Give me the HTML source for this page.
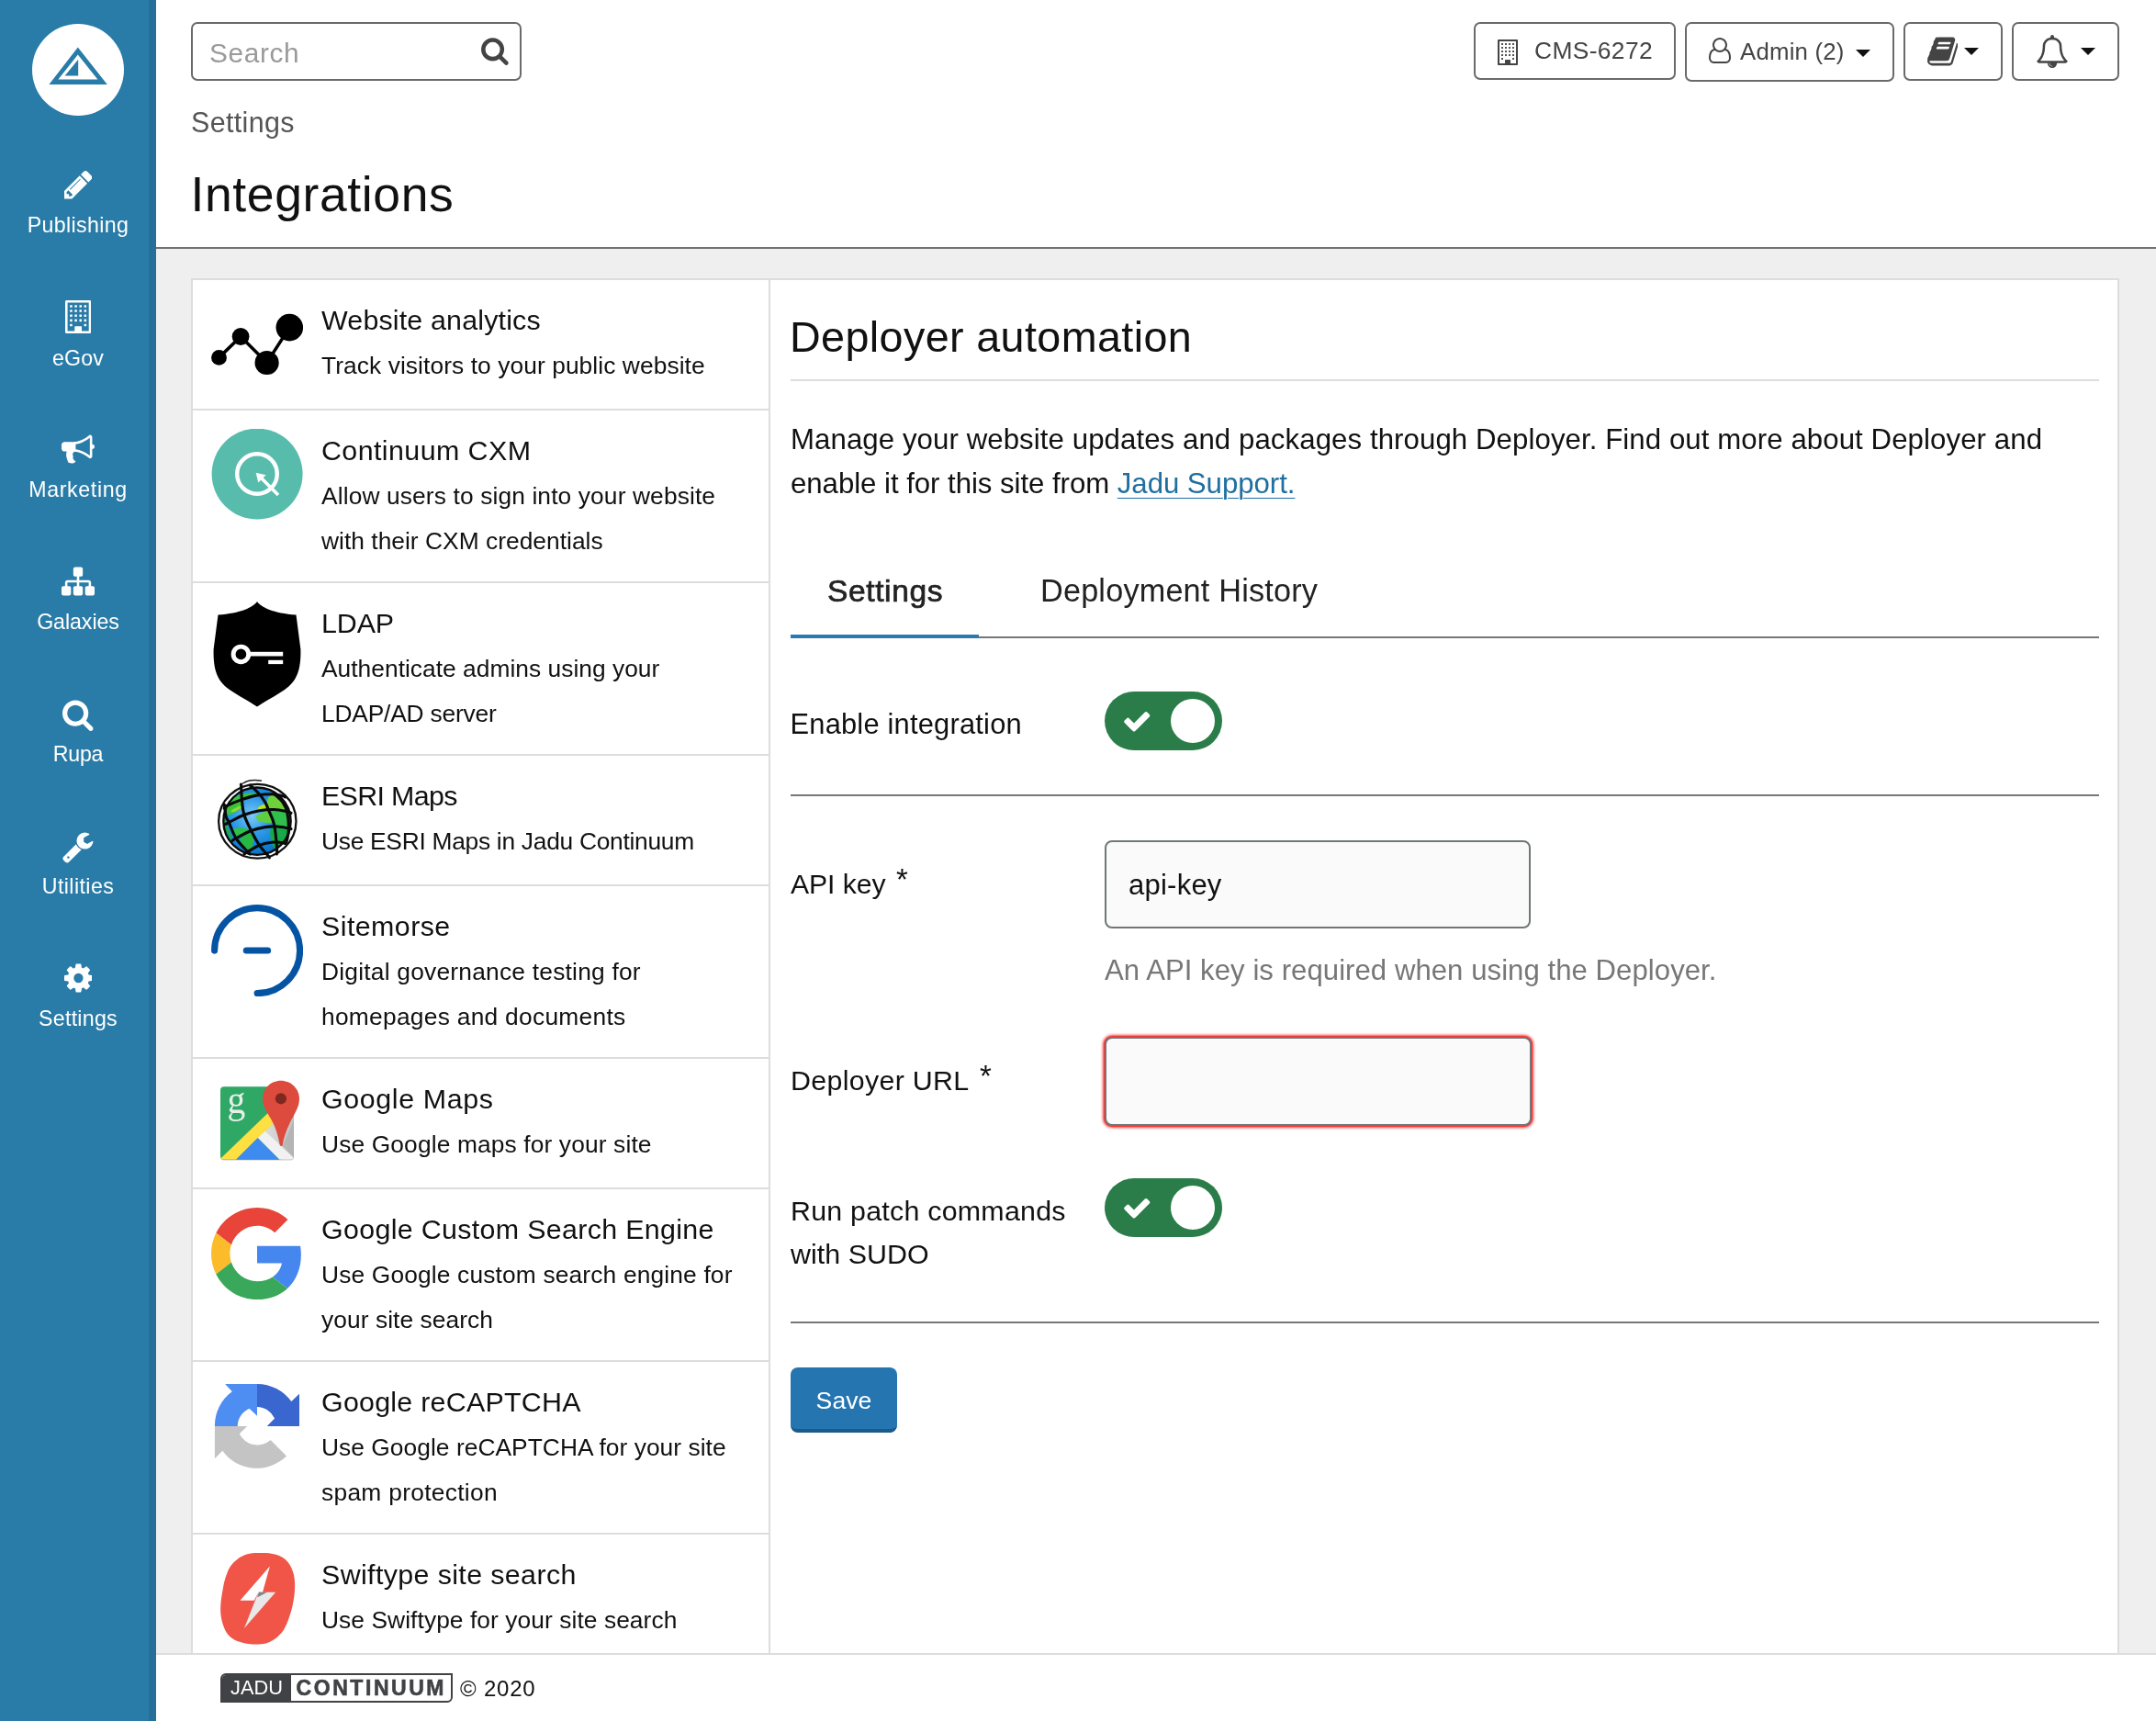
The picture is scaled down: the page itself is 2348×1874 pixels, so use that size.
<!DOCTYPE html>
<html lang="en">
<head>
<meta charset="utf-8">
<title>Integrations</title>
<style>
*{box-sizing:border-box;margin:0;padding:0}
html,body{width:2348px;height:1874px}
body{font-family:"Liberation Sans",sans-serif;background:#efefef;color:#111;position:relative;font-size:28px}
svg.fa{display:inline-block;fill:currentColor;vertical-align:middle}
a{color:#2475a8}
/* sidebar */
#sidebar{position:absolute;left:0;top:0;width:170px;height:1874px;background:#2a7ca8}
#sidebar:after{content:"";position:absolute;right:0;top:0;width:8px;height:100%;background:#256f98}
#logo{position:absolute;left:35px;top:26px;width:100px;height:100px;border-radius:50%;background:#fff}
.nav{position:absolute;left:0;width:170px;text-align:center;color:#fff}
.nav .ic{position:absolute;left:0;width:170px;top:0;height:40px;display:flex;justify-content:center;align-items:center}
.nav .lb{position:absolute;left:0;width:170px;top:0;font-size:23.2px;line-height:30px;white-space:nowrap}
/* header */
#header{position:absolute;left:170px;top:0;width:2178px;height:271px;background:#fff;border-bottom:2px solid #737373}
#search{position:absolute;left:38px;top:24px;width:360px;height:64px;border:2px solid #6a6a6a;border-radius:7px;background:#fff}
#search>span{position:absolute;left:18px;color:#9a9a9a;white-space:nowrap}
#search svg{position:absolute;right:12px;top:13px;color:#444}
#crumb{position:absolute;left:38px;color:#555;white-space:nowrap}
#title{position:absolute;left:37.5px;color:#111;font-weight:400;white-space:nowrap}
.tbtn{position:absolute;top:24px;height:64px;border:2px solid #6a6a6a;border-radius:7px;background:#fff;color:#444;font-size:28px;line-height:60px;white-space:nowrap}
.tbtn .i{position:absolute;line-height:0}
.tbtn .t{position:absolute}
.caret{position:absolute;width:0;height:0;border-left:8px solid transparent;border-right:8px solid transparent;border-top:8.5px solid #111}
/* main panel */
#panel{position:absolute;left:208px;top:303px;width:2100px;height:1498px;background:#fff;border:2px solid #ddd;border-bottom:0;overflow:hidden}
#list{position:absolute;left:0;top:0;width:629px;height:1498px;border-right:2px solid #ddd}
.it{position:relative;width:627px;border-bottom:2px solid #ddd}
.it.s{height:142px}.it.l{height:188px}
.it .im{position:absolute;left:20px;top:20px;width:100px}
.it .t{position:absolute;left:140px;top:18px;font-size:30.4px;line-height:50px;white-space:nowrap;color:#111}
.it .d{position:absolute;left:140px;top:69.4px;font-size:26.35px;line-height:49px;white-space:nowrap;color:#111}
#content{position:absolute;left:630px;top:0;width:1468px;height:1498px}
#content .abs{position:absolute;white-space:nowrap}
.hr{position:absolute;left:21px;width:1425px;height:2px;background:#777}
.lbl{position:absolute;left:21px;white-space:nowrap;color:#111}
.lbl sup{font-size:33px;line-height:0;vertical-align:baseline;position:relative;top:-4px;left:3px;letter-spacing:0}
.inp{position:absolute;left:363px;width:464px;height:96px;border:2px solid #707777;border-radius:8px;background:#fafafa}
.tog{position:absolute;left:363px;width:128px;height:64px;border-radius:32px;background:#2a7d49}
.tog b{position:absolute;right:8px;top:8px;width:48px;height:48px;border-radius:50%;background:#fff}
.tog svg{position:absolute;left:19.2px;top:16.1px;color:#fff}
#save{position:absolute;left:21px;top:1184px;width:116px;height:71px;border-radius:8px;background:#2575b0;border-bottom:4px solid #1c5a8a;color:#fff;font-size:26.6px;line-height:73px;text-align:center}
/* footer */
#footer{position:absolute;left:170px;top:1800px;width:2178px;height:74px;background:#fff;border-top:2px solid #ddd}
#jlogo{position:absolute;left:70px;top:20px;width:253px;height:32px;background:#fff;border:2px solid #414245;border-radius:6px 0 6px 0;overflow:hidden}
#jlogo .j{position:absolute;left:-2px;top:-2px;width:76.5px;height:32px;background:#414245;color:#fff;font-size:21.8px;line-height:32px;padding-left:11px;white-space:nowrap}
#jlogo .c{position:absolute;left:80.6px;top:-2px;font-weight:700;font-size:23px;letter-spacing:2.55px;-webkit-text-stroke:.6px #414245;line-height:32px;color:#414245;white-space:nowrap}
#copy{position:absolute;left:331px;white-space:nowrap;color:#111}
#para a{color:#1f6f9f;text-decoration:underline;text-decoration-thickness:1.3px;text-underline-offset:4.5px}
.im svg{display:block}
#sidebar,#header,#panel,#footer{will-change:transform}
</style>
</head>
<body>
<div id="sidebar">
  <div id="logo"><svg width="100" height="100" viewBox="0 0 100 100"><path fill="#2a7ca8" fill-rule="evenodd" d="M49.8 25.4 L81.8 66 L18.4 66 Z M49.8 33.6 L71.4 60.4 L28.4 60.4 Z"/><path fill="#2a7ca8" d="M50.2 38.8 L50.2 56.6 L35.6 56.6 Z"/></svg></div>
  <div class="nav" style="top:181px"><div class="ic"><svg class="fa" width="30.86" height="36.00" viewBox="0 -1536 1536 1792" ><path transform="scale(1,-1)" d="M363 0l91 91l-235 235l-91 -91v-107h128v-128h107zM886 928q0 22 -22 22q-10 0 -17 -7l-542 -542q-7 -7 -7 -17q0 -22 22 -22q10 0 17 7l542 542q7 7 7 17zM832 1120l416 -416l-832 -832h-416v416zM1515 1024q0 -53 -37 -90l-166 -166l-416 416l166 165q36 38 90 38 q53 0 91 -38l235 -234q37 -39 37 -91z"/></svg></div><div class="lb" style="top:49px"><span style="letter-spacing:0.371px">Publishing</span></div></div>
  <div class="nav" style="top:325px"><div class="ic"><svg class="fa" width="28.29" height="36.00" viewBox="0 -1536 1408 1792" ><path transform="scale(1,-1)" d="M384 224v-64q0 -13 -9.5 -22.5t-22.5 -9.5h-64q-13 0 -22.5 9.5t-9.5 22.5v64q0 13 9.5 22.5t22.5 9.5h64q13 0 22.5 -9.5t9.5 -22.5zM384 480v-64q0 -13 -9.5 -22.5t-22.5 -9.5h-64q-13 0 -22.5 9.5t-9.5 22.5v64q0 13 9.5 22.5t22.5 9.5h64q13 0 22.5 -9.5t9.5 -22.5z M640 480v-64q0 -13 -9.5 -22.5t-22.5 -9.5h-64q-13 0 -22.5 9.5t-9.5 22.5v64q0 13 9.5 22.5t22.5 9.5h64q13 0 22.5 -9.5t9.5 -22.5zM384 736v-64q0 -13 -9.5 -22.5t-22.5 -9.5h-64q-13 0 -22.5 9.5t-9.5 22.5v64q0 13 9.5 22.5t22.5 9.5h64q13 0 22.5 -9.5t9.5 -22.5z M1152 224v-64q0 -13 -9.5 -22.5t-22.5 -9.5h-64q-13 0 -22.5 9.5t-9.5 22.5v64q0 13 9.5 22.5t22.5 9.5h64q13 0 22.5 -9.5t9.5 -22.5zM896 480v-64q0 -13 -9.5 -22.5t-22.5 -9.5h-64q-13 0 -22.5 9.5t-9.5 22.5v64q0 13 9.5 22.5t22.5 9.5h64q13 0 22.5 -9.5t9.5 -22.5z M640 736v-64q0 -13 -9.5 -22.5t-22.5 -9.5h-64q-13 0 -22.5 9.5t-9.5 22.5v64q0 13 9.5 22.5t22.5 9.5h64q13 0 22.5 -9.5t9.5 -22.5zM384 992v-64q0 -13 -9.5 -22.5t-22.5 -9.5h-64q-13 0 -22.5 9.5t-9.5 22.5v64q0 13 9.5 22.5t22.5 9.5h64q13 0 22.5 -9.5t9.5 -22.5z M1152 480v-64q0 -13 -9.5 -22.5t-22.5 -9.5h-64q-13 0 -22.5 9.5t-9.5 22.5v64q0 13 9.5 22.5t22.5 9.5h64q13 0 22.5 -9.5t9.5 -22.5zM896 736v-64q0 -13 -9.5 -22.5t-22.5 -9.5h-64q-13 0 -22.5 9.5t-9.5 22.5v64q0 13 9.5 22.5t22.5 9.5h64q13 0 22.5 -9.5t9.5 -22.5z M640 992v-64q0 -13 -9.5 -22.5t-22.5 -9.5h-64q-13 0 -22.5 9.5t-9.5 22.5v64q0 13 9.5 22.5t22.5 9.5h64q13 0 22.5 -9.5t9.5 -22.5zM384 1248v-64q0 -13 -9.5 -22.5t-22.5 -9.5h-64q-13 0 -22.5 9.5t-9.5 22.5v64q0 13 9.5 22.5t22.5 9.5h64q13 0 22.5 -9.5t9.5 -22.5z M1152 736v-64q0 -13 -9.5 -22.5t-22.5 -9.5h-64q-13 0 -22.5 9.5t-9.5 22.5v64q0 13 9.5 22.5t22.5 9.5h64q13 0 22.5 -9.5t9.5 -22.5zM896 992v-64q0 -13 -9.5 -22.5t-22.5 -9.5h-64q-13 0 -22.5 9.5t-9.5 22.5v64q0 13 9.5 22.5t22.5 9.5h64q13 0 22.5 -9.5t9.5 -22.5z M640 1248v-64q0 -13 -9.5 -22.5t-22.5 -9.5h-64q-13 0 -22.5 9.5t-9.5 22.5v64q0 13 9.5 22.5t22.5 9.5h64q13 0 22.5 -9.5t9.5 -22.5zM1152 992v-64q0 -13 -9.5 -22.5t-22.5 -9.5h-64q-13 0 -22.5 9.5t-9.5 22.5v64q0 13 9.5 22.5t22.5 9.5h64q13 0 22.5 -9.5t9.5 -22.5z M896 1248v-64q0 -13 -9.5 -22.5t-22.5 -9.5h-64q-13 0 -22.5 9.5t-9.5 22.5v64q0 13 9.5 22.5t22.5 9.5h64q13 0 22.5 -9.5t9.5 -22.5zM1152 1248v-64q0 -13 -9.5 -22.5t-22.5 -9.5h-64q-13 0 -22.5 9.5t-9.5 22.5v64q0 13 9.5 22.5t22.5 9.5h64q13 0 22.5 -9.5t9.5 -22.5z M896 -128h384v1536h-1152v-1536h384v224q0 13 9.5 22.5t22.5 9.5h320q13 0 22.5 -9.5t9.5 -22.5v-224zM1408 1472v-1664q0 -26 -19 -45t-45 -19h-1280q-26 0 -45 19t-19 45v1664q0 26 19 45t45 19h1280q26 0 45 -19t19 -45z"/></svg></div><div class="lb" style="top:49.5px"><span style="letter-spacing:0.132px">eGov</span></div></div>
  <div class="nav" style="top:469px"><div class="ic"><svg class="fa" width="36.00" height="36.00" viewBox="0 -1536 1792 1792" ><path transform="scale(1,-1)" d="M1664 896q53 0 90.5 -37.5t37.5 -90.5t-37.5 -90.5t-90.5 -37.5v-384q0 -52 -38 -90t-90 -38q-417 347 -812 380q-58 -19 -91 -66t-31 -100.5t40 -92.5q-20 -33 -23 -65.5t6 -58t33.5 -55t48 -50t61.5 -50.5q-29 -58 -111.5 -83t-168.5 -11.5t-132 55.5q-7 23 -29.5 87.5 t-32 94.5t-23 89t-15 101t3.5 98.5t22 110.5h-122q-66 0 -113 47t-47 113v192q0 66 47 113t113 47h480q435 0 896 384q52 0 90 -38t38 -90v-384zM1536 292v954q-394 -302 -768 -343v-270q377 -42 768 -341z"/></svg></div><div class="lb" style="top:49px"><span style="letter-spacing:0.627px">Marketing</span></div></div>
  <div class="nav" style="top:613.4px"><div class="ic"><svg class="fa" width="36.00" height="36.00" viewBox="0 -1536 1792 1792" ><path transform="scale(1,-1)" d="M1792 288v-320q0 -40 -28 -68t-68 -28h-320q-40 0 -68 28t-28 68v320q0 40 28 68t68 28h96v192h-512v-192h96q40 0 68 -28t28 -68v-320q0 -40 -28 -68t-68 -28h-320q-40 0 -68 28t-28 68v320q0 40 28 68t68 28h96v192h-512v-192h96q40 0 68 -28t28 -68v-320 q0 -40 -28 -68t-68 -28h-320q-40 0 -68 28t-28 68v320q0 40 28 68t68 28h96v192q0 52 38 90t90 38h512v192h-96q-40 0 -68 28t-28 68v320q0 40 28 68t68 28h320q40 0 68 -28t28 -68v-320q0 -40 -28 -68t-68 -28h-96v-192h512q52 0 90 -38t38 -90v-192h96q40 0 68 -28t28 -68 z"/></svg></div><div class="lb" style="top:48.6px"><span style="letter-spacing:-0.068px">Galaxies</span></div></div>
  <div class="nav" style="top:757.5px"><div class="ic"><svg class="fa" width="33.43" height="36.00" viewBox="0 -1536 1664 1792" ><path transform="scale(1,-1)" d="M1152 704q0 185 -131.5 316.5t-316.5 131.5t-316.5 -131.5t-131.5 -316.5t131.5 -316.5t316.5 -131.5t316.5 131.5t131.5 316.5zM1664 -128q0 -52 -38 -90t-90 -38q-54 0 -90 38l-343 342q-179 -124 -399 -124q-143 0 -273.5 55.5t-225 150t-150 225t-55.5 273.5 t55.5 273.5t150 225t225 150t273.5 55.5t273.5 -55.5t225 -150t150 -225t55.5 -273.5q0 -220 -124 -399l343 -343q37 -37 37 -90z"/></svg></div><div class="lb" style="top:48.5px"><span style="letter-spacing:-0.290px">Rupa</span></div></div>
  <div class="nav" style="top:901.5px"><div class="ic"><svg class="fa" width="33.43" height="36.00" viewBox="0 -1536 1664 1792" ><path transform="scale(1,-1)" d="M384 64q0 26 -19 45t-45 19t-45 -19t-19 -45t19 -45t45 -19t45 19t19 45zM1028 484l-682 -682q-37 -37 -90 -37q-52 0 -91 37l-106 108q-38 36 -38 90q0 53 38 91l681 681q39 -98 114.5 -173.5t173.5 -114.5zM1662 919q0 -39 -23 -106q-47 -134 -164.5 -217.5 t-258.5 -83.5q-185 0 -316.5 131.5t-131.5 316.5t131.5 316.5t316.5 131.5q58 0 121.5 -16.5t107.5 -46.5q16 -11 16 -28t-16 -28l-293 -169v-224l193 -107q5 3 79 48.5t135.5 81t70.5 35.5q15 0 23.5 -10t8.5 -25z"/></svg></div><div class="lb" style="top:48.5px"><span style="letter-spacing:0.418px">Utilities</span></div></div>
  <div class="nav" style="top:1045px"><div class="ic"><svg class="fa" width="30.86" height="36.00" viewBox="0 -1536 1536 1792" ><path transform="scale(1,-1)" d="M1024 640q0 106 -75 181t-181 75t-181 -75t-75 -181t75 -181t181 -75t181 75t75 181zM1536 749v-222q0 -12 -8 -23t-20 -13l-185 -28q-19 -54 -39 -91q35 -50 107 -138q10 -12 10 -25t-9 -23q-27 -37 -99 -108t-94 -71q-12 0 -26 9l-138 108q-44 -23 -91 -38 q-16 -136 -29 -186q-7 -28 -36 -28h-222q-14 0 -24.5 8.5t-11.5 21.5l-28 184q-49 16 -90 37l-141 -107q-10 -9 -25 -9q-14 0 -25 11q-126 114 -165 168q-7 10 -7 23q0 12 8 23q15 21 51 66.5t54 70.5q-27 50 -41 99l-183 27q-13 2 -21 12.5t-8 23.5v222q0 12 8 23t19 13 l186 28q14 46 39 92q-40 57 -107 138q-10 12 -10 24q0 10 9 23q26 36 98.5 107.5t94.5 71.5q13 0 26 -10l138 -107q44 23 91 38q16 136 29 186q7 28 36 28h222q14 0 24.5 -8.5t11.5 -21.5l28 -184q49 -16 90 -37l142 107q9 9 24 9q13 0 25 -10q129 -119 165 -170q7 -8 7 -22 q0 -12 -8 -23q-15 -21 -51 -66.5t-54 -70.5q26 -50 41 -98l183 -28q13 -2 21 -12.5t8 -23.5z"/></svg></div><div class="lb" style="top:49px"><span style="letter-spacing:0.265px">Settings</span></div></div>
</div>
<div id="header">
  <div id="search"><span style="top:12.27px;font-size:29.8px;line-height:40px"><span style="letter-spacing:0.628px">Search</span></span><svg class="fa" width="29.71" height="32.00" viewBox="0 -1536 1664 1792" ><path transform="scale(1,-1)" d="M1152 704q0 185 -131.5 316.5t-316.5 131.5t-316.5 -131.5t-131.5 -316.5t131.5 -316.5t316.5 -131.5t316.5 131.5t131.5 316.5zM1664 -128q0 -52 -38 -90t-90 -38q-54 0 -90 38l-343 342q-179 -124 -399 -124q-143 0 -273.5 55.5t-225 150t-150 225t-55.5 273.5 t55.5 273.5t150 225t225 150t273.5 55.5t273.5 -55.5t225 -150t150 -225t55.5 -273.5q0 -220 -124 -399l343 -343q37 -37 37 -90z"/></svg></div>
  <div id="crumb" style="top:113.25px;font-size:30.44px;line-height:40px"><span style="letter-spacing:0.355px">Settings</span></div>
  <h1 id="title" style="top:177.36px;font-size:53.5px;line-height:70px"><span style="letter-spacing:0.614px">Integrations</span></h1>
  <div class="tbtn" id="b1" style="left:1435px;width:220px;height:63px">
    <span class="i" style="left:24px;top:17px"><svg class="fa" width="22.00" height="28.00" viewBox="0 -1536 1408 1792" ><path transform="scale(1,-1)" d="M384 224v-64q0 -13 -9.5 -22.5t-22.5 -9.5h-64q-13 0 -22.5 9.5t-9.5 22.5v64q0 13 9.5 22.5t22.5 9.5h64q13 0 22.5 -9.5t9.5 -22.5zM384 480v-64q0 -13 -9.5 -22.5t-22.5 -9.5h-64q-13 0 -22.5 9.5t-9.5 22.5v64q0 13 9.5 22.5t22.5 9.5h64q13 0 22.5 -9.5t9.5 -22.5z M640 480v-64q0 -13 -9.5 -22.5t-22.5 -9.5h-64q-13 0 -22.5 9.5t-9.5 22.5v64q0 13 9.5 22.5t22.5 9.5h64q13 0 22.5 -9.5t9.5 -22.5zM384 736v-64q0 -13 -9.5 -22.5t-22.5 -9.5h-64q-13 0 -22.5 9.5t-9.5 22.5v64q0 13 9.5 22.5t22.5 9.5h64q13 0 22.5 -9.5t9.5 -22.5z M1152 224v-64q0 -13 -9.5 -22.5t-22.5 -9.5h-64q-13 0 -22.5 9.5t-9.5 22.5v64q0 13 9.5 22.5t22.5 9.5h64q13 0 22.5 -9.5t9.5 -22.5zM896 480v-64q0 -13 -9.5 -22.5t-22.5 -9.5h-64q-13 0 -22.5 9.5t-9.5 22.5v64q0 13 9.5 22.5t22.5 9.5h64q13 0 22.5 -9.5t9.5 -22.5z M640 736v-64q0 -13 -9.5 -22.5t-22.5 -9.5h-64q-13 0 -22.5 9.5t-9.5 22.5v64q0 13 9.5 22.5t22.5 9.5h64q13 0 22.5 -9.5t9.5 -22.5zM384 992v-64q0 -13 -9.5 -22.5t-22.5 -9.5h-64q-13 0 -22.5 9.5t-9.5 22.5v64q0 13 9.5 22.5t22.5 9.5h64q13 0 22.5 -9.5t9.5 -22.5z M1152 480v-64q0 -13 -9.5 -22.5t-22.5 -9.5h-64q-13 0 -22.5 9.5t-9.5 22.5v64q0 13 9.5 22.5t22.5 9.5h64q13 0 22.5 -9.5t9.5 -22.5zM896 736v-64q0 -13 -9.5 -22.5t-22.5 -9.5h-64q-13 0 -22.5 9.5t-9.5 22.5v64q0 13 9.5 22.5t22.5 9.5h64q13 0 22.5 -9.5t9.5 -22.5z M640 992v-64q0 -13 -9.5 -22.5t-22.5 -9.5h-64q-13 0 -22.5 9.5t-9.5 22.5v64q0 13 9.5 22.5t22.5 9.5h64q13 0 22.5 -9.5t9.5 -22.5zM384 1248v-64q0 -13 -9.5 -22.5t-22.5 -9.5h-64q-13 0 -22.5 9.5t-9.5 22.5v64q0 13 9.5 22.5t22.5 9.5h64q13 0 22.5 -9.5t9.5 -22.5z M1152 736v-64q0 -13 -9.5 -22.5t-22.5 -9.5h-64q-13 0 -22.5 9.5t-9.5 22.5v64q0 13 9.5 22.5t22.5 9.5h64q13 0 22.5 -9.5t9.5 -22.5zM896 992v-64q0 -13 -9.5 -22.5t-22.5 -9.5h-64q-13 0 -22.5 9.5t-9.5 22.5v64q0 13 9.5 22.5t22.5 9.5h64q13 0 22.5 -9.5t9.5 -22.5z M640 1248v-64q0 -13 -9.5 -22.5t-22.5 -9.5h-64q-13 0 -22.5 9.5t-9.5 22.5v64q0 13 9.5 22.5t22.5 9.5h64q13 0 22.5 -9.5t9.5 -22.5zM1152 992v-64q0 -13 -9.5 -22.5t-22.5 -9.5h-64q-13 0 -22.5 9.5t-9.5 22.5v64q0 13 9.5 22.5t22.5 9.5h64q13 0 22.5 -9.5t9.5 -22.5z M896 1248v-64q0 -13 -9.5 -22.5t-22.5 -9.5h-64q-13 0 -22.5 9.5t-9.5 22.5v64q0 13 9.5 22.5t22.5 9.5h64q13 0 22.5 -9.5t9.5 -22.5zM1152 1248v-64q0 -13 -9.5 -22.5t-22.5 -9.5h-64q-13 0 -22.5 9.5t-9.5 22.5v64q0 13 9.5 22.5t22.5 9.5h64q13 0 22.5 -9.5t9.5 -22.5z M896 -128h384v1536h-1152v-1536h384v224q0 13 9.5 22.5t22.5 9.5h320q13 0 22.5 -9.5t9.5 -22.5v-224zM1408 1472v-1664q0 -26 -19 -45t-45 -19h-1280q-26 0 -45 19t-19 45v1664q0 26 19 45t45 19h1280q26 0 45 -19t19 -45z"/></svg></span><span class="t" style="left:64px;top:8.65px;font-size:26.4px;line-height:40px"><span style="letter-spacing:0.350px">CMS-6272</span></span></div>
  <div class="tbtn" id="b2" style="left:1665px;width:228px;height:65px">
    <span class="i" style="left:23.5px;top:15px"><svg class="fa" width="24.00" height="28.00" viewBox="0 -1536 1536 1792" ><path transform="scale(1,-1)" d="M1201 752q47 -14 89.5 -38t89 -73t79.5 -115.5t55 -172t22 -236.5q0 -154 -100 -263.5t-241 -109.5h-854q-141 0 -241 109.5t-100 263.5q0 131 22 236.5t55 172t79.5 115.5t89 73t89.5 38q-79 125 -79 272q0 104 40.5 198.5t109.5 163.5t163.5 109.5t198.5 40.5 t198.5 -40.5t163.5 -109.5t109.5 -163.5t40.5 -198.5q0 -147 -79 -272zM768 1408q-159 0 -271.5 -112.5t-112.5 -271.5t112.5 -271.5t271.5 -112.5t271.5 112.5t112.5 271.5t-112.5 271.5t-271.5 112.5zM1195 -128q88 0 150.5 71.5t62.5 173.5q0 239 -78.5 377t-225.5 145 q-145 -127 -336 -127t-336 127q-147 -7 -225.5 -145t-78.5 -377q0 -102 62.5 -173.5t150.5 -71.5h854z"/></svg></span><span class="t" style="left:58px;top:9.96px;font-size:25.8px;line-height:40px"><span style="letter-spacing:0.201px">Admin (2)</span></span><i class="caret" style="left:184px;top:28px"></i></div>
  <div class="tbtn" id="b3" style="left:1903px;width:108px">
    <span class="i" style="left:24px;top:12px"><svg class="fa" width="33.43" height="36.00" viewBox="0 -1536 1664 1792" ><path transform="scale(1,-1)" d="M1639 1058q40 -57 18 -129l-275 -906q-19 -64 -76.5 -107.5t-122.5 -43.5h-923q-77 0 -148.5 53.5t-99.5 131.5q-24 67 -2 127q0 4 3 27t4 37q1 8 -3 21.5t-3 19.5q2 11 8 21t16.5 23.5t16.5 23.5q23 38 45 91.5t30 91.5q3 10 0.5 30t-0.5 28q3 11 17 28t17 23 q21 36 42 92t25 90q1 9 -2.5 32t0.5 28q4 13 22 30.5t22 22.5q19 26 42.5 84.5t27.5 96.5q1 8 -3 25.5t-2 26.5q2 8 9 18t18 23t17 21q8 12 16.5 30.5t15 35t16 36t19.5 32t26.5 23.5t36 11.5t47.5 -5.5l-1 -3q38 9 51 9h761q74 0 114 -56t18 -130l-274 -906 q-36 -119 -71.5 -153.5t-128.5 -34.5h-869q-27 0 -38 -15q-11 -16 -1 -43q24 -70 144 -70h923q29 0 56 15.5t35 41.5l300 987q7 22 5 57q38 -15 59 -43zM575 1056q-4 -13 2 -22.5t20 -9.5h608q13 0 25.5 9.5t16.5 22.5l21 64q4 13 -2 22.5t-20 9.5h-608q-13 0 -25.5 -9.5 t-16.5 -22.5zM492 800q-4 -13 2 -22.5t20 -9.5h608q13 0 25.5 9.5t16.5 22.5l21 64q4 13 -2 22.5t-20 9.5h-608q-13 0 -25.5 -9.5t-16.5 -22.5z"/></svg></span><i class="caret" style="left:64px;top:26px"></i></div>
  <div class="tbtn" id="b4" style="left:2021px;width:117px">
    <span class="i" style="left:24px;top:12px"><svg class="fa" width="36.00" height="36.00" viewBox="0 -1536 1792 1792" ><path transform="scale(1,-1)" d="M912 -160q0 16 -16 16q-59 0 -101.5 42.5t-42.5 101.5q0 16 -16 16t-16 -16q0 -73 51.5 -124.5t124.5 -51.5q16 0 16 16zM246 128h1300q-266 300 -266 832q0 51 -24 105t-69 103t-121.5 80.5t-169.5 31.5t-169.5 -31.5t-121.5 -80.5t-69 -103t-24 -105q0 -532 -266 -832z M1728 128q0 -52 -38 -90t-90 -38h-448q0 -106 -75 -181t-181 -75t-181 75t-75 181h-448q-52 0 -90 38t-38 90q50 42 91 88t85 119.5t74.5 158.5t50 206t19.5 260q0 152 117 282.5t307 158.5q-8 19 -8 39q0 40 28 68t68 28t68 -28t28 -68q0 -20 -8 -39q190 -28 307 -158.5 t117 -282.5q0 -139 19.5 -260t50 -206t74.5 -158.5t85 -119.5t91 -88z"/></svg></span><i class="caret" style="left:73px;top:26px"></i></div>
</div>
<div id="panel">
<div id="list">
  <div class="it s"><div class="im" id="i1"><svg width="100" height="100" viewBox="0 0 100 100"><g stroke="#000" stroke-width="3.6" fill="none"><path d="M8.5 64.4 L32.1 41.5 L60.6 70 L85.3 31.6"/></g><circle cx="8.5" cy="64.4" r="8.4"/><circle cx="32.1" cy="41.5" r="9.4"/><circle cx="60.6" cy="70" r="13.1"/><circle cx="85.3" cy="31.6" r="14.8"/></svg></div><div class="t"><span style="letter-spacing:0.170px">Website analytics</span></div><div class="d"><span style="letter-spacing:0.079px">Track visitors to your public website</span></div></div>
  <div class="it l"><div class="im" id="i2"><svg width="100" height="100" viewBox="0 0 100 100"><circle cx="50.1" cy="49.1" r="49.5" fill="#58bcad"/><circle cx="50" cy="49" r="21.8" fill="none" stroke="#fff" stroke-width="4.4"/><path d="M55 54 L73 72" stroke="#fff" stroke-width="3.6" fill="none"/><path d="M48.7 47.7 L59.6 50.3 L51.3 58.6 Z" fill="#fff"/></svg></div><div class="t"><span style="letter-spacing:0.417px">Continuum CXM</span></div><div class="d"><span style="letter-spacing:0.122px">Allow users to sign into your website</span><br><span style="letter-spacing:0.026px">with their CXM credentials</span></div></div>
  <div class="it l"><div class="im" id="i3"><svg width="100" height="116" viewBox="0 0 100 116"><path d="M50 0 C46 6 32 13 7.5 14.5 L2.6 52 C2 75 7 87 20 96 C30 103 42 109 50 114.5 C58 109 70 103 80 96 C93 87 98 75 97.4 52 L92.5 14.5 C68 13 54 6 50 0 Z" fill="#000"/><circle cx="32.4" cy="57.4" r="8.3" fill="none" stroke="#fff" stroke-width="4.9"/><rect x="42.5" y="54.8" width="35.7" height="4.7" fill="#fff"/><rect x="62.2" y="63.8" width="16" height="4.3" fill="#fff"/></svg></div><div class="t"><span style="letter-spacing:-0.110px">LDAP</span></div><div class="d"><span style="letter-spacing:0.025px">Authenticate admins using your</span><br><span style="letter-spacing:-0.184px">LDAP/AD server</span></div></div>
  <div class="it s"><div class="im" id="i4"><svg width="100" height="100" viewBox="0 0 100 100"><defs><radialGradient id="eg" cx=".42" cy=".42" r=".6"><stop offset="0" stop-color="#7cc8f5"/><stop offset=".45" stop-color="#2f9be8"/><stop offset="1" stop-color="#0473c8"/></radialGradient><clipPath id="ec"><circle cx="50.0" cy="51.2" r="36.4"/></clipPath></defs><ellipse cx="50.3" cy="51.2" rx="42.2" ry="40.4" fill="#fff" stroke="#111" stroke-width="2.3"/><g clip-path="url(#ec)"><circle cx="50.0" cy="51.2" r="36.4" fill="url(#eg)"/><path fill="#3dc03c" d="M16.1 35.9 C16.9 33.8 19.0 30.6 21.8 28.2 C24.7 25.9 29.3 23.1 33.4 21.8 C37.4 20.6 43.5 20.4 46.1 20.6 C48.8 20.8 51.5 21.8 49.3 23.1 C47.2 24.4 35.9 26.1 33.4 28.2 C30.8 30.4 36.1 33.2 34.0 35.9 C31.9 38.6 23.4 43.4 20.6 44.2 C17.7 45.1 17.5 42.4 16.7 41.0 C16.0 39.6 15.2 38.0 16.1 35.9 Z"/><path fill="#8ddb2b" d="M21.8 39.7 C22.8 38.7 28.9 35.3 30.8 34.6 C32.7 34.0 34.3 34.8 33.4 35.9 C32.4 37.0 27.0 40.4 25.0 41.0 C23.1 41.7 20.9 40.8 21.8 39.7 Z"/><path fill="#6fd23a" d="M61.5 27.0 C62.2 24.5 65.0 23.3 67.2 23.1 C69.5 22.9 72.7 23.0 74.9 25.7 C77.1 28.3 82.7 37.1 80.7 39.1 C78.6 41.1 65.9 39.8 62.8 37.8 C59.6 35.8 60.7 29.4 61.5 27.0 Z"/><path fill="#b4e51e" d="M51.2 35.9 C52.3 34.8 57.2 32.4 58.9 32.7 C60.6 33.0 62.5 36.8 61.5 37.8 C60.4 38.9 54.2 39.4 52.5 39.1 C50.8 38.8 50.2 37.0 51.2 35.9 Z"/><path fill="#5fcf3d" d="M50.0 44.9 C52.2 43.7 60.0 39.1 62.8 40.4 C65.5 41.7 68.3 50.7 66.6 52.5 C64.9 54.3 55.4 52.1 52.5 51.2 C49.7 50.4 49.8 48.5 49.3 47.4 C48.9 46.3 47.7 46.0 50.0 44.9 Z"/><path fill="#2fbf4a" d="M64.7 40.4 C66.9 37.9 80.0 39.3 83.2 42.3 C86.5 45.3 86.4 55.8 84.2 58.3 C81.9 60.7 73.0 60.0 69.8 57.0 C66.5 54.0 62.4 42.8 64.7 40.4 Z"/><path fill="#19a94a" d="M65.3 58.9 C68.1 55.8 81.1 57.4 83.8 59.6 C86.6 61.7 83.4 68.1 81.9 71.7 C80.4 75.3 77.3 80.2 74.9 81.3 C72.4 82.4 68.8 81.8 67.2 78.1 C65.6 74.4 62.5 62.0 65.3 58.9 Z"/><path fill="#2dc04a" d="M25.0 59.6 C26.6 58.6 30.7 58.0 33.4 58.3 C36.0 58.6 41.9 59.8 41.0 61.5 C40.2 63.2 31.1 68.1 28.2 68.5 C25.4 68.9 24.3 65.5 23.8 64.0 C23.2 62.5 23.4 60.5 25.0 59.6 Z"/><path fill="#27b743" d="M31.4 71.1 C31.9 67.9 39.8 64.1 42.3 64.0 C44.7 63.9 45.9 67.3 46.1 70.4 C46.3 73.5 44.6 80.4 43.6 82.6 C42.5 84.7 41.8 85.1 39.7 83.2 C37.7 81.3 31.0 74.3 31.4 71.1 Z"/><path fill="#1fa94a" d="M13.5 43.6 C14.0 43.0 14.5 47.9 16.1 52.5 C17.7 57.1 22.4 68.1 23.1 71.1 C23.9 74.0 22.2 73.0 20.6 70.4 C19.0 67.9 14.7 60.2 13.5 55.7 C12.4 51.2 13.1 44.1 13.5 43.6 Z"/></g><g fill="none" stroke="#0a0a0a" stroke-width="3.1" stroke-linecap="round"><path d="M14.2 37.2 C14.6 36.8 13.5 36.2 16.7 34.6 C19.9 33.0 27.9 29.5 33.4 27.6 C38.8 25.7 43.7 24.1 49.3 23.1 C55.0 22.2 62.4 21.7 67.2 21.8 C72.0 22.0 75.9 23.2 78.1 23.8 C80.3 24.3 80.2 24.8 80.7 25.0"/><path d="M15.5 54.4 C16.1 54.1 15.9 54.2 19.3 52.5 C22.7 50.8 30.4 46.3 35.9 44.2 C41.4 42.1 47.1 40.7 52.5 39.7 C58.0 38.8 63.3 38.3 68.5 38.5 C73.7 38.7 80.8 40.4 83.8 41.0 C86.9 41.7 86.5 42.1 87.0 42.3"/><path d="M23.1 72.3 C23.8 71.9 23.6 71.6 27.0 69.8 C30.4 68.0 38.3 63.5 43.6 61.5 C48.9 59.5 54.2 58.4 58.9 57.6 C63.6 56.9 67.4 56.8 71.7 57.0 C76.0 57.2 81.9 58.5 84.5 58.9 C87.0 59.3 86.6 59.5 87.0 59.6"/><path d="M35.9 87.0 C36.5 86.6 37.0 86.1 39.7 84.5 C42.5 82.9 48.3 79.2 52.5 77.5 C56.8 75.7 61.6 74.8 65.3 74.3 C69.0 73.7 72.3 74.0 74.9 74.3 C77.5 74.5 79.7 75.3 80.7 75.5"/><path d="M32.4 11.0 C32.4 11.4 32.6 10.8 32.7 13.5 C32.9 16.3 32.8 22.5 33.4 27.6 C33.9 32.7 34.2 38.6 35.9 44.2 C37.6 49.9 40.8 55.9 43.6 61.5 C46.3 67.0 49.5 73.0 52.5 77.5 C55.5 81.9 59.7 86.1 61.5 88.3 C63.3 90.6 63.1 90.5 63.4 90.9"/><path d="M42.3 12.3 C42.5 12.4 41.9 11.3 43.6 12.9 C45.3 14.5 50.0 18.9 52.5 21.8 C55.1 24.8 57.2 27.8 58.9 30.8 C60.6 33.8 61.5 36.8 62.8 39.7 C64.0 42.7 65.5 45.7 66.6 48.7 C67.7 51.7 68.4 53.4 69.1 57.6 C69.9 61.9 70.6 69.8 71.1 74.3 C71.5 78.7 71.6 82.4 71.7 84.5 C71.8 86.6 71.4 86.6 71.4 87.0"/><path d="M68.5 21.8 C68.8 22.1 68.8 21.6 70.4 23.1 C72.0 24.6 76.1 27.8 78.1 30.8 C80.1 33.8 81.5 36.3 82.6 41.0 C83.6 45.7 84.5 53.8 84.5 58.9 C84.5 64.0 83.1 69.0 82.6 71.7 C82.0 74.4 81.5 74.4 81.3 74.9"/><path d="M14.5 33.4 C14.5 33.8 14.5 33.8 14.8 35.9 C15.1 38.0 15.3 43.4 16.1 46.1 C16.8 48.9 17.5 48.6 19.3 52.5 C21.1 56.5 23.6 64.5 27.0 69.8 C30.4 75.1 37.2 81.6 39.7 84.5 C42.3 87.4 41.9 86.6 42.3 87.0"/></g><circle cx="50.0" cy="51.2" r="36.7" fill="none" stroke="#0a0a0a" stroke-width="2.3"/><path d="M32.7 11.0 C33.9 10.4 37.2 8.2 39.7 7.5 C42.3 6.7 45.5 6.6 48.1 6.5 C50.6 6.5 53.9 7.0 55.1 7.1" fill="none" stroke="#222" stroke-width="1.4"/></svg></div><div class="t"><span style="letter-spacing:-0.656px">ESRI Maps</span></div><div class="d"><span style="letter-spacing:-0.275px">Use ESRI Maps in Jadu Continuum</span></div></div>
  <div class="it l"><div class="im" id="i5"><svg width="100" height="100" viewBox="0 0 100 100"><g fill="none" stroke="#0554a4" stroke-width="7.1" stroke-linecap="round"><path d="M3.6 50.1 A46.5 46.5 0 1 1 50.1 96.6"/><path d="M38.3 50 L61.6 50"/></g></svg></div><div class="t"><span style="letter-spacing:0.434px">Sitemorse</span></div><div class="d"><span style="letter-spacing:0.221px">Digital governance testing for</span><br><span style="letter-spacing:0.275px">homepages and documents</span></div></div>
  <div class="it s"><div class="im" id="i6"><svg width="100" height="100" viewBox="0 0 100 100"><defs><clipPath id="mc"><rect x="10" y="10.2" width="80" height="79.6" rx="4"/></clipPath><linearGradient id="mg" x1="0" y1="0" x2="1" y2="0"><stop offset="0" stop-color="#dcdcdc"/><stop offset="1" stop-color="#c2c2c2"/></linearGradient></defs><rect x="10" y="11.4" width="80" height="79.4" rx="4" fill="#cfcfc8" opacity=".7"/><g clip-path="url(#mc)"><rect x="10" y="10" width="80" height="80" fill="#2fa866"/><polygon fill="url(#mg)" points="58.9,58.5 74.9,42.5 89.9,27.8 89.9,89.8"/><polygon fill="#fee042" points="10.0,88.8 61.5,39.3 90.9,11.2 90.9,27.8 27.0,89.8 10.0,89.8"/><polygon fill="#f1f1f1" points="50.6,66.1 58.9,58.5 90.9,88.8 90.9,90.4 74.3,89.8"/><polygon fill="#3e8bf0" points="27.0,89.8 50.6,66.1 74.3,89.8"/><polygon fill="#9a9a9a" opacity=".38" points="77.5,75.1 90.9,45.1 90.9,87.9"/></g><path fill="#dd4b3e" d="M75.9 3.8 C64.7 3.8 56.0 12.5 56.0 23.6 C56.0 32.9 62.8 40.6 67.2 49.5 C71.7 58.5 73.6 67.4 74.9 74.5 C75.5 75.1 77.1 75.1 77.6 74.5 C78.7 67.4 81.3 58.5 85.8 49.5 C90.2 40.6 96.0 32.9 96.0 23.6 C96.0 12.5 87.0 3.8 75.9 3.8 Z"/><circle cx="75.9" cy="23.3" r="6.1" fill="#7f2820"/><text transform="translate(17.4 39.2) scale(.9 1)" font-family="Liberation Serif,serif" font-size="44" fill="#f4f4f4" fill-opacity=".93">g</text></svg></div><div class="t"><span style="letter-spacing:0.630px">Google Maps</span></div><div class="d"><span style="letter-spacing:0.132px">Use Google maps for your site</span></div></div>
  <div class="it l"><div class="im" id="i7"><svg width="100" height="100" viewBox="0 0 48 48"><path fill="#e8443a" d="M24 9.5c3.54 0 6.71 1.22 9.21 3.6l6.85-6.85C35.9 2.38 30.47 0 24 0 14.62 0 6.51 5.38 2.56 13.22l7.98 6.19C12.43 13.72 17.74 9.5 24 9.5z"/><path fill="#4587ee" d="M46.98 24.55c0-1.57-.15-3.09-.38-4.55H24v9.02h12.94c-.58 2.96-2.26 5.48-4.78 7.18l7.73 6c4.51-4.18 7.09-10.36 7.09-17.65z"/><path fill="#fbbb2b" d="M10.53 28.59c-.48-1.45-.76-2.99-.76-4.59s.27-3.14.76-4.59l-7.98-6.19C.92 16.46 0 20.12 0 24c0 3.88.92 7.54 2.56 10.78l7.97-6.19z"/><path fill="#39a85a" d="M24 48c6.48 0 11.93-2.13 15.89-5.81l-7.73-6c-2.15 1.45-4.92 2.3-8.16 2.3-6.26 0-11.57-4.22-13.47-9.91l-7.98 6.19C6.51 42.62 14.62 48 24 48z"/></svg></div><div class="t"><span style="letter-spacing:0.326px">Google Custom Search Engine</span></div><div class="d"><span style="letter-spacing:0.153px">Use Google custom search engine for</span><br><span style="letter-spacing:0.071px">your site search</span></div></div>
  <div class="it l"><div class="im" id="i8"><svg width="100" height="100" viewBox="0 0 100 100"><path fill="#4e8df2" d="M15.1 3.9 L50 3.9 L50 38.8 L41.6 30.8 A21 21 0 0 0 28.7 50 L3.9 50 A46 46 0 0 1 22.8 12.3 Z"/><path fill="#3a66cf" d="M50 3.9 A46 46 0 0 1 87.3 23.1 L96 14.8 L96 50 L60.8 50 L69.1 41.6 A21.5 21.5 0 0 0 50 29 Z"/><path fill="#c4c4c4" d="M3.9 50 L39.2 50 L30.8 58.3 A21.5 21.5 0 0 0 64.6 65 L82 82.4 A46 46 0 0 1 12.3 76.8 L3.9 85.2 Z"/></svg></div><div class="t"><span style="letter-spacing:0.248px">Google reCAPTCHA</span></div><div class="d"><span style="letter-spacing:0.041px">Use Google reCAPTCHA for your site</span><br><span style="letter-spacing:0.294px">spam protection</span></div></div>
  <div class="it s"><div class="im" id="i9"><svg width="100" height="100" viewBox="0 0 100 100"><path fill="#f05548" d="M52.8 -0.2 C42 -0.2 35 2 29 6.4 C23 11 20 15 17.9 20.4 C15 28 14 32 13 37.8 C11.5 46 10.5 52 10.2 58.7 C10 66 10.7 71 12.3 76.2 C14 82 16 86.5 19.3 90.1 C23 94 27 96 31.8 97.1 C36 98.5 41 99.5 45.8 99.5 C51 99.6 55 99.5 59.7 98.5 C65 97 70 94 73.7 90.1 C78 86 80.5 81.5 82.7 76.2 C85 70 87 64.5 88.3 58.7 C90 51 91 44.5 91.1 37.8 C91.3 31 90.8 25.5 89 20.4 C87 14.5 84.5 10.5 80.7 7.1 C76.5 3.5 72 1.8 66.7 0.9 C62 0 57 -0.2 52.8 -0.2 Z"/><path fill="#fff" d="M63.9 14.5 L31.5 51.8 L46.8 51.8 L51.4 42.7 L56 42.7 Z"/><path fill="#e9e9e9" d="M70.2 42.7 L51.4 42.7 L36 82.1 Z"/><path fill="#6d7478" d="M52 42.7 L61 42.7 L50 48.5 Z" opacity=".85"/></svg></div><div class="t"><span style="letter-spacing:0.374px">Swiftype site search</span></div><div class="d"><span style="letter-spacing:0.071px">Use Swiftype for your site search</span></div></div>
</div>
<div id="content">
  <h2 class="abs" style="left:20px;font-weight:400;top:27.32px;font-size:46.7px;line-height:70px" id="h2"><span style="letter-spacing:0.384px">Deployer automation</span></h2>
  <div class="hr" style="top:108px;background:#ddd"></div>
  <p class="abs" id="para" style="left:21px;top:150.49px;font-size:31.2px;line-height:48px"><span style="letter-spacing:0.080px">Manage your website updates and packages through Deployer. Find out more about Deployer and</span><br><span style="letter-spacing:-0.045px">enable it for this site from <a>Jadu Support.</a></span></p>
  <div class="abs tab" id="tab1" style="left:61px;top:313.66px;font-size:33.6px;line-height:50px;color:#222;-webkit-text-stroke:.7px #222"><span style="letter-spacing:0.589px">Settings</span></div>
  <div class="abs tab" id="tab2" style="left:293px;top:313.43px;font-size:34.25px;line-height:50px;color:#222"><span style="letter-spacing:0.179px">Deployment History</span></div>
  <div class="hr" style="top:388px"></div>
  <div class="hr" style="top:386px;height:4px;width:205px;background:#2a7ab0"></div>
  <div class="lbl" id="l1" style="left:20.5px;top:459.91px;font-size:30.85px;line-height:48px"><span style="letter-spacing:0.207px">Enable integration</span></div>
  <div class="tog" style="top:448px"><svg class="fa" width="32.50" height="32.50" viewBox="0 -1536 1792 1792" ><path transform="scale(1,-1)" d="M1671 970q0 -40 -28 -68l-724 -724l-136 -136q-28 -28 -68 -28t-68 28l-136 136l-362 362q-28 28 -28 68t28 68l136 136q28 28 68 28t68 -28l294 -295l656 657q28 28 68 28t68 -28l136 -136q28 -28 28 -68z"/></svg><b></b></div>
  <div class="hr" style="top:560px"></div>
  <div class="lbl" id="l2" style="top:633.54px;font-size:30.2px;line-height:48px"><span style="letter-spacing:-0.075px">API key</span> <sup>*</sup></div>
  <div class="inp" style="top:610px"><span class="abs" id="v1" style="left:24px;top:22.86px;font-size:31px;line-height:48px"><span style="letter-spacing:0.237px">api-key</span></span></div>
  <div class="abs" id="help" style="left:363px;top:728.22px;font-size:31.1px;line-height:48px;color:#777"><span style="letter-spacing:0.059px">An API key is required when using the Deployer.</span></div>
  <div class="lbl" id="l3" style="top:847.47px;font-size:30.4px;line-height:48px"><span style="letter-spacing:0.308px">Deployer URL</span> <sup>*</sup></div>
  <div class="inp" style="top:824px;height:97px;width:465px;box-shadow:0 0 0 1px rgba(255,48,48,.9),0 0 3px 2px rgba(255,45,45,.92)"></div>
  <div class="lbl" id="l4" style="top:989.62px;font-size:30.4px;line-height:47.5px"><span style="letter-spacing:0.229px">Run patch commands</span><br><span style="letter-spacing:0.043px">with SUDO</span></div>
  <div class="tog" style="top:978px"><svg class="fa" width="32.50" height="32.50" viewBox="0 -1536 1792 1792" ><path transform="scale(1,-1)" d="M1671 970q0 -40 -28 -68l-724 -724l-136 -136q-28 -28 -68 -28t-68 28l-136 136l-362 362q-28 28 -28 68t28 68l136 136q28 28 68 28t68 -28l294 -295l656 657q28 28 68 28t68 -28l136 -136q28 -28 28 -68z"/></svg><b></b></div>
  <div class="hr" style="top:1134px"></div>
  <div id="save"><span style="letter-spacing:0.049px">Save</span></div>
</div>
</div>
<div id="footer">
  <div id="jlogo"><span class="j">JADU</span><span class="c">CONTINUUM</span></div>
  <div id="copy" style="top:17.08px;font-size:24px;line-height:40px"><span style="letter-spacing:0.787px">© 2020</span></div>
</div>
<script>(function(){var d=window.devicePixelRatio||1;if(d>1&&Math.abs(window.innerWidth*d-2348)<4){document.documentElement.style.zoom=1/d;}})();</script>
</body>
</html>
